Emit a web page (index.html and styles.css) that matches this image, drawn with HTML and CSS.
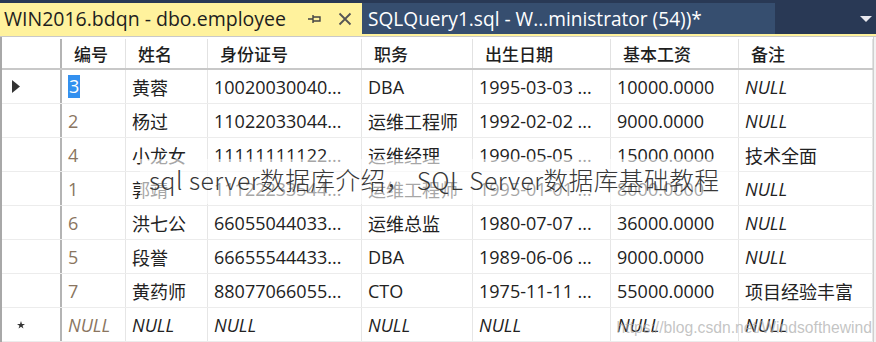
FILE: index.html
```html
<!DOCTYPE html>
<html lang="zh-CN">
<head>
<meta charset="utf-8">
<title>dbo.employee</title>
<link rel="stylesheet" href="styles.css">
</head>
<body>
<div class="window">
  <div class="tabbar">
    <div class="tab tab-active">
      <span class="tab-title">WIN2016.bdqn - dbo.employee</span>
      <svg class="pin" width="14" height="10" viewBox="0 0 14 10"><path d="M0 5H5M5 1V9M5 3H12V7H5" fill="none" stroke="#444" stroke-width="1.4"/></svg>
      <svg class="close" width="14" height="14" viewBox="0 0 14 14"><path d="M1.5 1.5L12.5 12.5M12.5 1.5L1.5 12.5" stroke="#555" stroke-width="1.8"/></svg>
    </div>
    <div class="tab tab-inactive">
      <span class="tab-title">SQLQuery1.sql - W...ministrator (54))*</span>
    </div>
    <div class="tab-fill">
      <svg class="dropdown" width="12" height="6" viewBox="0 0 12 6"><path d="M0 0H12L6 6Z" fill="#e8e8ee"/></svg>
    </div>
  </div>
  <div class="accent"></div>
  <div class="grid">
    <div class="row header">
      <div class="cell gutter"></div>
      <div class="cell">编号</div>
      <div class="cell">姓名</div>
      <div class="cell">身份证号</div>
      <div class="cell">职务</div>
      <div class="cell">出生日期</div>
      <div class="cell">基本工资</div>
      <div class="cell">备注</div>
    </div>
    <div class="row">
      <div class="cell gutter"><svg width="9" height="13" viewBox="0 0 9 13"><path d="M0 0L8 6.5L0 13Z" fill="#333"/></svg></div>
      <div class="cell id"><span class="selected">3</span></div>
      <div class="cell">黄蓉</div>
      <div class="cell">10020030040...</div>
      <div class="cell">DBA</div>
      <div class="cell">1995-03-03 ...</div>
      <div class="cell">10000.0000</div>
      <div class="cell null">NULL</div>
    </div>
    <div class="row">
      <div class="cell gutter"></div>
      <div class="cell id">2</div>
      <div class="cell">杨过</div>
      <div class="cell">11022033044...</div>
      <div class="cell">运维工程师</div>
      <div class="cell">1992-02-02 ...</div>
      <div class="cell">9000.0000</div>
      <div class="cell null">NULL</div>
    </div>
    <div class="row">
      <div class="cell gutter"></div>
      <div class="cell id">4</div>
      <div class="cell">小龙女</div>
      <div class="cell">11111111122...</div>
      <div class="cell">运维经理</div>
      <div class="cell">1990-05-05 ...</div>
      <div class="cell">15000.0000</div>
      <div class="cell">技术全面</div>
    </div>
    <div class="row">
      <div class="cell gutter"></div>
      <div class="cell id">1</div>
      <div class="cell">郭靖</div>
      <div class="cell">11122233544...</div>
      <div class="cell">运维工程师</div>
      <div class="cell">1995-01-01 ...</div>
      <div class="cell">8000.0000</div>
      <div class="cell null">NULL</div>
    </div>
    <div class="row">
      <div class="cell gutter"></div>
      <div class="cell id">6</div>
      <div class="cell">洪七公</div>
      <div class="cell">66055044033...</div>
      <div class="cell">运维总监</div>
      <div class="cell">1980-07-07 ...</div>
      <div class="cell">36000.0000</div>
      <div class="cell null">NULL</div>
    </div>
    <div class="row">
      <div class="cell gutter"></div>
      <div class="cell id">5</div>
      <div class="cell">段誉</div>
      <div class="cell">66655544433...</div>
      <div class="cell">DBA</div>
      <div class="cell">1989-06-06 ...</div>
      <div class="cell">9000.0000</div>
      <div class="cell null">NULL</div>
    </div>
    <div class="row">
      <div class="cell gutter"></div>
      <div class="cell id">7</div>
      <div class="cell">黄药师</div>
      <div class="cell">88077066055...</div>
      <div class="cell">CTO</div>
      <div class="cell">1975-11-11 ...</div>
      <div class="cell">55000.0000</div>
      <div class="cell">项目经验丰富</div>
    </div>
    <div class="row">
      <div class="cell gutter star"><svg width="8" height="8" viewBox="0 0 10 10"><path d="M5 0L6.2 3.6H10L6.9 5.8L8.1 9.5L5 7.2L1.9 9.5L3.1 5.8L0 3.6H3.8Z" fill="#333"/></svg></div>
      <div class="cell id null">NULL</div>
      <div class="cell null">NULL</div>
      <div class="cell null">NULL</div>
      <div class="cell null">NULL</div>
      <div class="cell null">NULL</div>
      <div class="cell null">NULL</div>
      <div class="cell null">NULL</div>
    </div>
  </div>
  <div class="caption">sql server数据库介绍， SQL Server数据库基础教程</div>
  <div class="watermark">https://blog.csdn.net/Windsofthewind</div>
</div>
</body>
</html>
```
FILE: styles.css
```css
* { box-sizing: border-box; }
html, body { margin: 0; padding: 0; }
body {
  width: 876px;
  height: 342px;
  overflow: hidden;
  background: #f3f3f3;
  font-family: "Open Sans", "Noto Sans CJK SC", sans-serif;
}
.window { position: relative; width: 876px; height: 342px; }

.tabbar {
  display: flex;
  align-items: flex-end;
  height: 34px;
  background: #293955;
}
.tab {
  height: 31px;
  display: flex;
  align-items: center;
  font-size: 19.5px;
  white-space: nowrap;
}
.tab-active {
  width: 362px;
  background: #fff29d;
  color: #1e1e1e;
  padding-left: 4px;
}
.tab-active .tab-title { flex: 1; }
.pin { margin-right: 16px; }
.close { margin-right: 10px; }
.tab-inactive {
  width: 413px;
  background: #364e6f;
  color: #ffffff;
  padding-left: 6px;
  font-size: 19.1px;
}
.tab-fill {
  flex: 1;
  height: 31px;
  display: flex;
  align-items: center;
  justify-content: flex-end;
  padding-right: 4px;
}
.accent {
  height: 3px;
  background: #fff29d;
  border-bottom: 1px solid #c9c9c9;
}

.grid {
  width: 874px;
  background: #ffffff;
  border-left: 2px solid #a8a8a8;
  border-right: 1px solid #cfcfcf;
}
.row {
  display: grid;
  grid-template-columns: 60px 64px 82px 154px 111px 138px 128px 134px;
  height: 34px;
  border-bottom: 1px solid #ececec;
  font-size: 18px;
  color: #222222;
}
.row.header {
  height: 33px;
  border-bottom: 2px solid #c8c8c8;
  font-size: 17px;
  font-weight: 500;
  color: #1e1e1e;
  padding-top: 2px;
}
.cell {
  display: flex;
  align-items: center;
  padding-left: 6px;
  border-right: 1px solid #e6e6e6;
  white-space: nowrap;
  overflow: hidden;
}
.header .cell { padding-left: 12px; border-right-color: #e2e2e2; }
.cell.gutter {
  padding-left: 10px;
  border-right: 2px solid #b4b4b4;
}
.cell.gutter.star { padding-left: 15px; }
.cell.id { color: #8a7560; }
.selected {
  background: #3390ef;
  color: #ffffff;
  padding: 1px 1px;
  line-height: 21px;
}
.null { font-style: italic; }

.caption {
  position: absolute;
  left: 140px;
  top: 159px;
  width: 598px;
  height: 45px;
  padding-left: 9px;
  background: rgba(255, 255, 255, 0.6);
  color: #383838;
  font-family: "Noto Sans CJK SC", sans-serif;
  font-weight: 300;
  font-size: 24.7px;
  letter-spacing: 0.45px;
  line-height: 40px;
  white-space: nowrap;
}
.watermark {
  position: absolute;
  right: 4px;
  top: 319px;
  font-family: "Liberation Sans", sans-serif;
  font-size: 15.7px;
  color: rgba(170, 170, 170, 0.7);
  white-space: nowrap;
}
```
